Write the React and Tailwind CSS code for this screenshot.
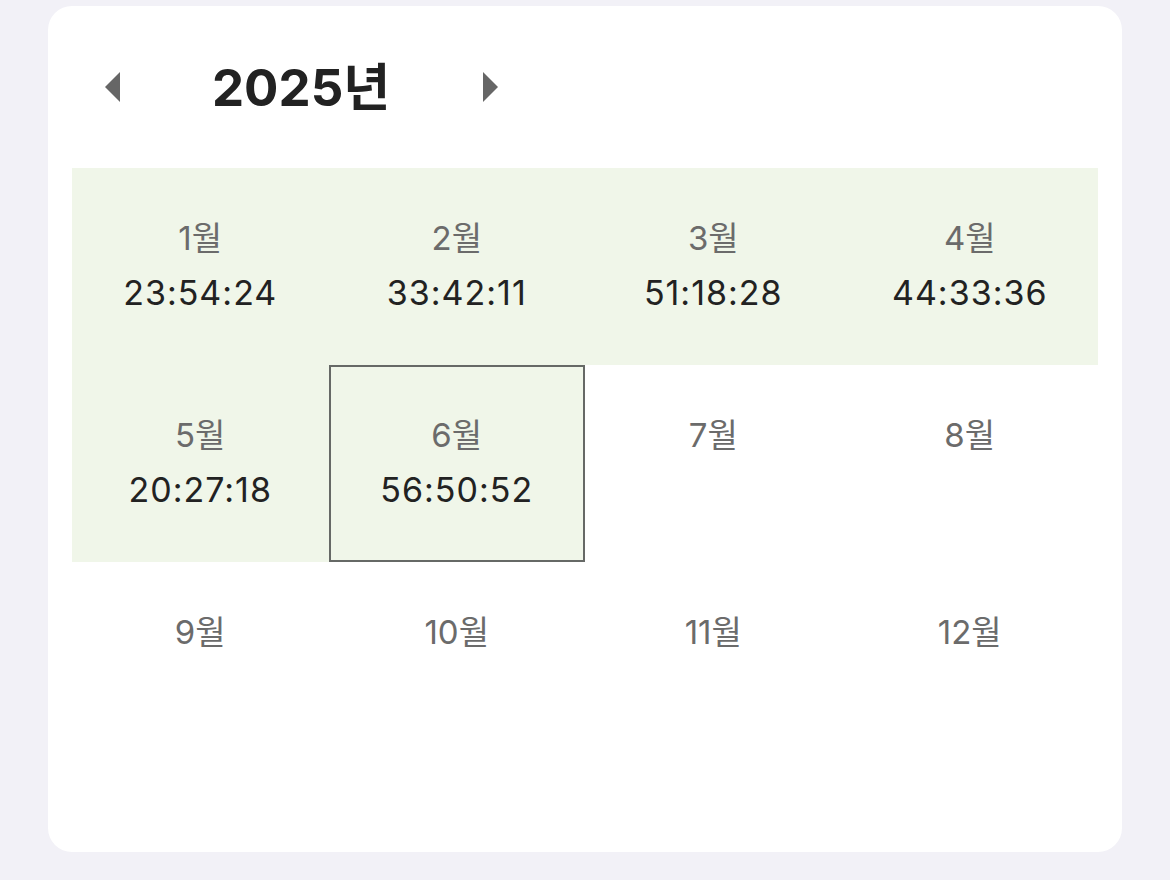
import React, { useState } from "react";

const months = [
  { m: "1월", t: "23:54:24" },
  { m: "2월", t: "33:42:11" },
  { m: "3월", t: "51:18:28" },
  { m: "4월", t: "44:33:36" },
  { m: "5월", t: "20:27:18" },
  { m: "6월", t: "56:50:52" },
  { m: "7월" },
  { m: "8월" },
  { m: "9월" },
  { m: "10월" },
  { m: "11월" },
  { m: "12월" },
];

export default function App() {
  const [year, setYear] = useState(2025);
  const [selected, setSelected] = useState(5);

  return (
    <div className="min-h-[880px] w-[1170px] bg-[#f2f1f7] pt-[6px] font-['Inter','Noto_Sans_CJK_KR',sans-serif]">
      <div className="ml-[48px] w-[1074px] h-[846px] rounded-[24px] bg-white px-6">
        <div className="h-[162px] flex items-center">
          <button onClick={() => setYear(year - 1)} className="ml-[33px] w-[15px] h-[30px] flex items-center">
            <svg width="15" height="30" viewBox="0 0 15 30"><polygon points="15,0 15,30 0,15" fill="#666666" /></svg>
          </button>
          <div className="ml-[92px] w-[180px] text-[51px] leading-none font-bold text-[#222222] whitespace-nowrap">
            {year}년
          </div>
          <button onClick={() => setYear(year + 1)} className="ml-[91px] w-[15px] h-[30px] flex items-center">
            <svg width="15" height="30" viewBox="0 0 15 30"><polygon points="0,0 0,30 15,15" fill="#666666" /></svg>
          </button>
        </div>

        <div className="grid grid-cols-4">
          {months.map((item, index) => (
            <div
              key={index}
              onClick={() => setSelected(index)}
              className={
                "h-[197px] flex flex-col items-center pt-[49px] border-2 " +
                (item.t ? "bg-[#f0f6e9] " : "bg-white ") +
                (selected === index ? "border-[#666966]" : "border-transparent")
              }
            >
              <div className="text-[33px] leading-[38px] text-[#6b6b6b]">{item.m}</div>
              {item.t && (
                <div className="mt-[17px] text-[34px] leading-[38px] tracking-[1px] text-[#222222]">{item.t}</div>
              )}
            </div>
          ))}
        </div>
      </div>
    </div>
  );
}
